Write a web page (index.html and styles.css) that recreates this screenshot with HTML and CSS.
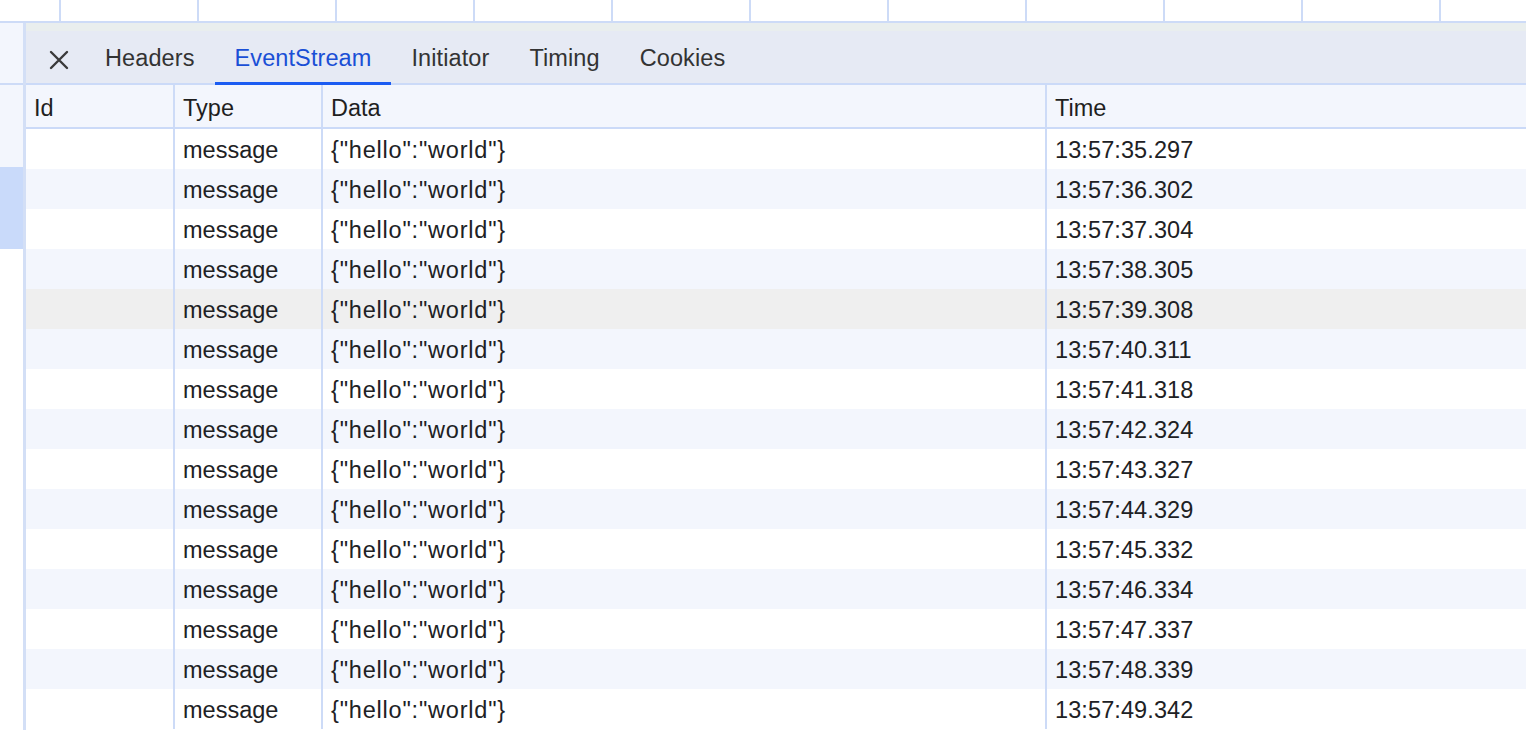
FILE: index.html
```html
<!DOCTYPE html>
<html>
<head>
<meta charset="utf-8">
<link rel="stylesheet" href="styles.css">
</head>
<body>
<div class="top-row">
  <div class="tcell first"></div>
  <div class="tcell"></div><div class="tcell"></div><div class="tcell"></div><div class="tcell"></div>
  <div class="tcell"></div><div class="tcell"></div><div class="tcell"></div><div class="tcell"></div>
  <div class="tcell"></div><div class="tcell"></div><div class="tcell"></div>
</div>
<div class="main">
  <div class="side">
    <div class="seg pale s1"></div>
    <div class="seg line"></div>
    <div class="seg pale s2"></div>
    <div class="seg sel"></div>
  </div>
  <div class="panel">
    <div class="tabbar">
      <div class="close">
        <svg width="20" height="20" viewBox="0 0 20 20"><path d="M2 2 L18 18 M18 2 L2 18" stroke="#3a3a3a" stroke-width="2.4" stroke-linecap="round" fill="none"/></svg>
      </div>
      <div class="tab">Headers</div>
      <div class="tab active">EventStream</div>
      <div class="tab">Initiator</div>
      <div class="tab">Timing</div>
      <div class="tab">Cookies</div>
    </div>
    <div class="grid head">
      <div class="c">Id</div><div class="c">Type</div><div class="c">Data</div><div class="c last">Time</div>
    </div>
    <div class="body">
      <div class="grid row"><div class="c"></div><div class="c">message</div><div class="c json">{"hello":"world"}</div><div class="c last time">13:57:35.297</div></div>
      <div class="grid row alt"><div class="c"></div><div class="c">message</div><div class="c json">{"hello":"world"}</div><div class="c last time">13:57:36.302</div></div>
      <div class="grid row"><div class="c"></div><div class="c">message</div><div class="c json">{"hello":"world"}</div><div class="c last time">13:57:37.304</div></div>
      <div class="grid row alt"><div class="c"></div><div class="c">message</div><div class="c json">{"hello":"world"}</div><div class="c last time">13:57:38.305</div></div>
      <div class="grid row hover"><div class="c"></div><div class="c">message</div><div class="c json">{"hello":"world"}</div><div class="c last time">13:57:39.308</div></div>
      <div class="grid row alt"><div class="c"></div><div class="c">message</div><div class="c json">{"hello":"world"}</div><div class="c last time">13:57:40.311</div></div>
      <div class="grid row"><div class="c"></div><div class="c">message</div><div class="c json">{"hello":"world"}</div><div class="c last time">13:57:41.318</div></div>
      <div class="grid row alt"><div class="c"></div><div class="c">message</div><div class="c json">{"hello":"world"}</div><div class="c last time">13:57:42.324</div></div>
      <div class="grid row"><div class="c"></div><div class="c">message</div><div class="c json">{"hello":"world"}</div><div class="c last time">13:57:43.327</div></div>
      <div class="grid row alt"><div class="c"></div><div class="c">message</div><div class="c json">{"hello":"world"}</div><div class="c last time">13:57:44.329</div></div>
      <div class="grid row"><div class="c"></div><div class="c">message</div><div class="c json">{"hello":"world"}</div><div class="c last time">13:57:45.332</div></div>
      <div class="grid row alt"><div class="c"></div><div class="c">message</div><div class="c json">{"hello":"world"}</div><div class="c last time">13:57:46.334</div></div>
      <div class="grid row"><div class="c"></div><div class="c">message</div><div class="c json">{"hello":"world"}</div><div class="c last time">13:57:47.337</div></div>
      <div class="grid row alt"><div class="c"></div><div class="c">message</div><div class="c json">{"hello":"world"}</div><div class="c last time">13:57:48.339</div></div>
      <div class="grid row"><div class="c"></div><div class="c">message</div><div class="c json">{"hello":"world"}</div><div class="c last time">13:57:49.342</div></div>
    </div>
  </div>
</div>
</body>
</html>
```
FILE: styles.css
```css
html, body {
  margin: 0;
  padding: 0;
  background: #ffffff;
  overflow: hidden;
  height: 730px;
}
body {
  font-family: "Liberation Sans", Arial, Helvetica, sans-serif;
  font-size: 23.5px;
  color: #202124;
}
.top-row {
  display: flex;
  height: 21px;
  border-bottom: 2px solid #cddbf7;
}
.tcell {
  flex: 0 0 136px;
  border-right: 2px solid #cddbf7;
}
.tcell.first {
  flex-basis: 59px;
}
.main {
  display: flex;
  height: 707px;
}
.side {
  flex: 0 0 23px;
  border-right: 3px solid #d3dff6;
  display: flex;
  flex-direction: column;
}
.seg.pale { background: #f3f6fd; }
.seg.s1 { height: 60px; }
.seg.line { height: 2px; background: #cddbf7; }
.seg.s2 { height: 82px; }
.seg.sel { height: 82px; background: #c9dafa; }
.panel {
  flex: 1;
  display: flex;
  flex-direction: column;
  min-width: 0;
}
.tabbar {
  display: flex;
  height: 60px;
  border-bottom: 2px solid #cbdaf8;
  background: linear-gradient(#e9eeee 0, #e9eeee 8px, #e6eaf4 8px);
}
.close {
  flex: 0 0 59px;
  box-sizing: border-box;
  padding: 14px 0 0 23px;
  display: flex;
  align-items: center;
}
.close svg { display: block; }
.tab {
  height: 62px;
  box-sizing: border-box;
  padding: 12px 20px 0;
  border-bottom: 3px solid transparent;
  margin-bottom: -2px;
  display: flex;
  align-items: center;
  color: #333333;
  letter-spacing: 0.1px;
  position: relative;
  z-index: 1;
}
.tab.active {
  color: #1a4fd6;
  border-bottom-color: #1b5cf2;
}
.grid {
  display: grid;
  grid-template-columns: 149px 148px 724px 1fr;
}
.head {
  height: 42px;
  background: #f3f6fd;
  border-bottom: 2px solid #cbdaf8;
}
.c {
  box-sizing: border-box;
  border-right: 2px solid #cddbf7;
  padding-left: 8px;
  display: flex;
  align-items: center;
  white-space: nowrap;
  overflow: hidden;
}
.c.last { border-right: none; }
.head .c { color: #1f1f1f; padding-top: 4px; }
.row { height: 40px; background: #ffffff; }
.row .c { padding-top: 2px; }
.row.alt { background: #f3f6fd; }
.row.hover { background: #efefef; }
.json { letter-spacing: 0.8px; }
.time { letter-spacing: 0.1px; }
```
